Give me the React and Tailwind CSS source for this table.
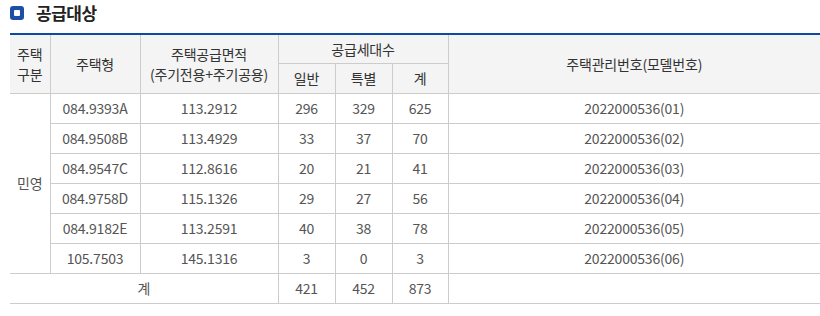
import React from "react";

const rows = [
  ["084.9393A", "113.2912", 296, 329, 625, "2022000536(01)"],
  ["084.9508B", "113.4929", 33, 37, 70, "2022000536(02)"],
  ["084.9547C", "112.8616", 20, 21, 41, "2022000536(03)"],
  ["084.9758D", "115.1326", 29, 27, 56, "2022000536(04)"],
  ["084.9182E", "113.2591", 40, 38, 78, "2022000536(05)"],
  ["105.7503", "145.1316", 3, 0, 3, "2022000536(06)"],
];

export default function App() {
  const th = "bg-[#f4f4f4] border border-[#cccccc] font-normal text-[#333] text-center align-middle";
  const td = "border border-[#cccccc] text-center align-middle h-[30px] p-0";
  return (
    <div className="w-[820px] h-[316px] bg-white font-['Noto_Sans_CJK_KR','Noto_Sans',sans-serif] text-[14px] text-[#555] tracking-[-0.2px]">
      <div className="flex items-center h-[26px] pl-[10px]">
        <span className="w-[14px] h-[14px] rounded-[3px] bg-[#1d4fa6] flex items-center justify-center">
          <span className="w-[6px] h-[6px] bg-white rounded-[1px]" />
        </span>
        <h2 className="ml-[12px] text-[17px] font-bold text-[#222] tracking-[-0.5px]">공급대상</h2>
      </div>
      <div className="pl-[10px] pt-[7px]">
        <table className="w-[810px] border-collapse border-t-2 border-t-[#0d4aa6] table-fixed leading-[20px]">
          <colgroup>
            <col className="w-[40px]" />
            <col className="w-[90px]" />
            <col className="w-[138px]" />
            <col className="w-[57px]" />
            <col className="w-[57px]" />
            <col className="w-[56px]" />
            <col />
          </colgroup>
          <thead>
            <tr className="h-[29px]">
              <th rowSpan={2} className={th + " border-l-0"}>주택<br />구분</th>
              <th rowSpan={2} className={th}>주택형</th>
              <th rowSpan={2} className={th}>주택공급면적<br />(주기전용+주기공용)</th>
              <th colSpan={3} className={th}>공급세대수</th>
              <th rowSpan={2} className={th + " border-r-0"}>주택관리번호(모델번호)</th>
            </tr>
            <tr className="h-[30px]">
              <th className={th}>일반</th>
              <th className={th}>특별</th>
              <th className={th}>계</th>
            </tr>
          </thead>
          <tbody>
            {rows.map((r, i) => (
              <tr key={i}>
                {i === 0 && (
                  <td rowSpan={6} className={td + " border-l-0"}>민영</td>
                )}
                <td className={td}>{r[0]}</td>
                <td className={td}>{r[1]}</td>
                <td className={td}>{r[2]}</td>
                <td className={td}>{r[3]}</td>
                <td className={td}>{r[4]}</td>
                <td className={td + " border-r-0"}>{r[5]}</td>
              </tr>
            ))}
            <tr>
              <td colSpan={3} className={td + " border-l-0"}>계</td>
              <td className={td}>421</td>
              <td className={td}>452</td>
              <td className={td}>873</td>
              <td className={td + " border-r-0"}></td>
            </tr>
          </tbody>
        </table>
      </div>
    </div>
  );
}
